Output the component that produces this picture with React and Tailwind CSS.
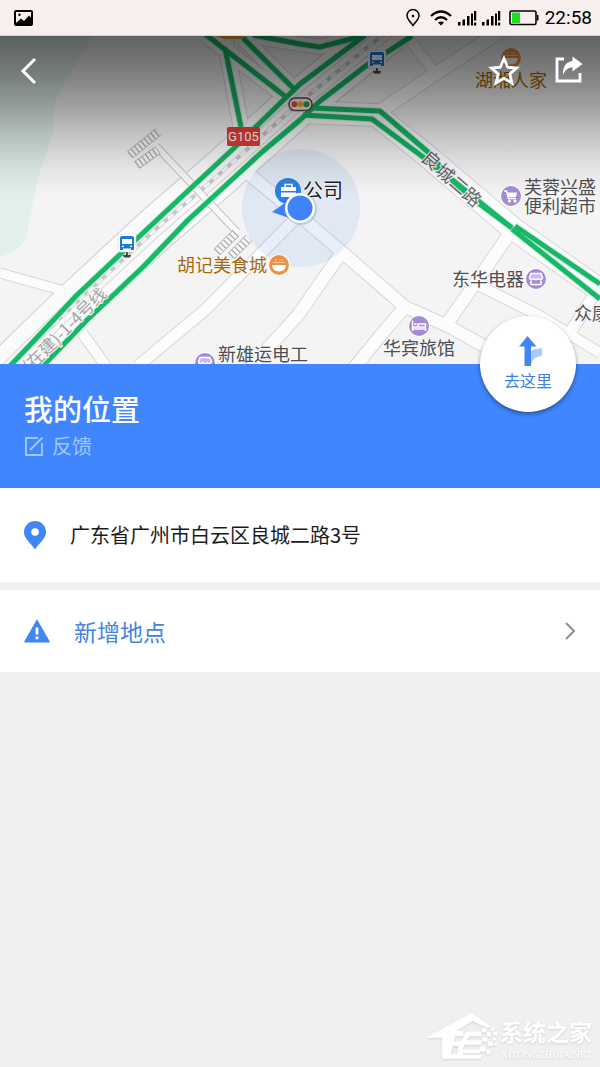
import React from 'react';

const cjk = 'font-["Noto_Sans_CJK_SC",sans-serif]';

// side streets, each drawn twice: a grey casing and a white fill
const streets = [
  { d: 'M0 273 L68 292', w: 9 },
  { d: 'M82 333 L106 366', w: 10 },
  { d: 'M245 171 L300 216 L342 252 L405 307 L450 327 L530 372', w: 12 },
  { d: 'M298 216 L205 310 L138 366', w: 11 },
  { d: 'M342 252 L298 315 L250 368', w: 12 },
  { d: 'M405 307 L385 330 L354 368', w: 12 },
  { d: 'M512 230 L477 281 L446 325', w: 12 },
  { d: 'M474 283 L538 315 L600 353', w: 10 },
  { d: 'M597 290 L568 336', w: 11 },
  { d: 'M382 110 L432 76 L502 30', w: 13 },
  { d: 'M408 38 L436 74', w: 10 },
  { d: 'M225 40 L241 127', w: 15 },
  { d: 'M207 36 L288 98', w: 15 },
  { d: 'M243 38 L297 92', w: 15 },
  { d: 'M250 36 L320 47 L365 34', w: 14 },
  { d: 'M303 112 L376 115 L426 155 L512 228 L600 290', w: 22 },
];

const highway = 'M-15 392 L28 349 L76 303 L157 228 L215 178 L300 102 L389 30';

const traffic = [
  'M10 366 L30 345 L77 295 L127 248 L190 189 L233 149 L300 84 L364 36',
  'M43 366 L87 320 L143 267 L188 220 L225 186 L262 152 L300 120 L320 101 L367 65 L412 36',
  'M205 34 L286 97',
  'M243 38 L296 91',
  'M225 48 L241 127',
  'M253 35 L300 44 L320 47 L366 35',
  'M312 108 L380 111 L428 152 L450 178 L512 228',
  'M303 115 L372 119 L423 157 L470 197 L512 228',
  'M515 226 L600 284',
  'M512 229 L600 299',
];

const StatusBar = () => (
  <header className="flex h-9 items-center justify-between border-b border-stone-300 bg-[#f7eeee] pl-3.5 pr-2 text-black">
    <svg className="h-4 w-5" viewBox="0 0 20 16">
      <rect x="1" y="1" width="17" height="14" rx="1" fill="none" stroke="black" strokeWidth="2" />
      <circle cx="5.5" cy="4.8" r="1.2" />
      <path d="M2 13 L7 8.500 L10 11 L15 5.500 L18 9 V15 H2Z" />
    </svg>
    <div className="flex items-center">
      <svg className="h-5 w-4" viewBox="0 0 16 20" fill="none" stroke="black" strokeWidth="1.500">
        <path d="M8 17.500 C5 13.500 2 11 2 7.500 A6 6 0 0 1 14 7.500 C14 11 11 13.500 8 17.500Z" />
        <circle cx="8" cy="8" r="1.300" fill="black" stroke="none" />
      </svg>
      <svg className="ml-2 h-5 w-6" viewBox="0 0 24 20" fill="none" stroke="black" strokeWidth="2.200">
        <path d="M2 8 Q12 -1 22 8" />
        <path d="M6 12 Q12 6.500 18 12" />
        <path d="M9 14.500 Q12 12.500 15 14.500 L12 17.500Z" fill="black" stroke="none" />
      </svg>
      {[0, 1].map((sim) => (
        <svg key={sim} className="ml-1 h-5 w-5" viewBox="0 0 20 20">
          <path d="M1 14h2.500v3.500H1z M5.500 11.500H8v6H5.500z M10 8h2.500v9.500H10z M14 5.500h2v12h-2z M17 3h2.200v9.500H17z M17 14.500h2.200v3H17z" />
        </svg>
      ))}
      <svg className="ml-2 h-4 w-8" viewBox="0 0 32 16">
        <rect x="1" y="1" width="26" height="13.500" rx="1.500" fill="none" stroke="black" strokeWidth="1.600" />
        <rect x="3" y="2.500" width="8" height="10.500" fill="#1fdc24" />
        <path d="M28 5h1.500v5.500H28z" />
      </svg>
      <span className="ml-1 font-[Roboto,sans-serif] text-[19px] leading-6">22:58</span>
    </div>
  </header>
);

const BusStop = ({ x, y }) => (
  <g transform={`translate(${x} ${y})`}>
    <path d="M-1 9h2v3h3l-1 2.500h-6l-1-2.500h3z" fill="#4d4048" />
    <rect x="-9" y="-9" width="18" height="18" rx="2" fill="white" stroke="#c9d3de" strokeWidth="0.500" />
    <path d="M-7 -5 Q-7 -7 -5 -7 H5 Q7 -7 7 -5 V7 H4 V5.500 H-4 V7 H-7Z" fill="#1a78d8" />
    <path d="M-5 -4 H5 V1 H-5Z M-5 2.800h2v1.300h-2z M3 2.800h2v1.300H3z" fill="white" />
  </g>
);

const Poi = ({ x, y, color, children }) => (
  <g transform={`translate(${x} ${y})`}>
    <circle r="10.800" fill="white" />
    <circle r="10" fill={color} />
    <g fill="none" stroke="white" strokeWidth="1.500">{children}</g>
  </g>
);

const Shop = ({ x, y }) => (
  <Poi x={x} y={y} color="#a58ad8">
    <path d="M-5 -5.500 H5 L6.500 -1 Q4.500 2 2.300 -0.500 Q0 2 -2.300 -0.500 Q-4.500 2 -6.500 -1Z" fill="#c9b8ea" />
    <path d="M-5 1.500 V5.500 H5 V1.500" />
  </Poi>
);

const Food = ({ x, y }) => (
  <Poi x={x} y={y} color="#eb9045">
    <path d="M-7 0 H7 Q6.500 6.500 0 6.500 Q-6.500 6.500 -7 0Z" fill="white" stroke="none" />
    <path d="M-6 -2.500 H6 M-4 -5 H-2 M0 -5 H4" strokeWidth="1.200" stroke="#f8c9a0" />
  </Poi>
);

const Ladder = ({ d }) => (
  <>
    <path d={d} stroke="#b5b5b5" strokeWidth="9" />
    <path d={d} stroke="#f6f6f6" strokeWidth="7.500" />
    <path d={d} stroke="#a8a8a8" strokeWidth="8" strokeDasharray="1.200 3" />
  </>
);

const MapView = () => (
  <svg className="block h-full w-full" viewBox="0 36 600 328" preserveAspectRatio="xMidYMid slice">
    <defs>
      <linearGradient id="shade" x1="0" y1="0" x2="0" y2="1">
        <stop offset="0" stopColor="black" stopOpacity="0.600" />
        <stop offset="0.200" stopColor="black" stopOpacity="0.500" />
        <stop offset="0.420" stopColor="black" stopOpacity="0.360" />
        <stop offset="0.620" stopColor="black" stopOpacity="0.200" />
        <stop offset="0.820" stopColor="black" stopOpacity="0.070" />
        <stop offset="1" stopColor="black" stopOpacity="0" />
      </linearGradient>
    </defs>
    <rect y="36" width="600" height="328" fill="#f4f4f4" />
    <path d="M0 36 H93 L60 90 L54 105 L53 132 L37 182 L26 238 Q18 252 0 257Z" fill="#e1f0eb" />

    <g fill="none">
      {streets.map((s) => (
        <path key={s.d} d={s.d} stroke="#d9d6d9" strokeWidth={s.w + 2} />
      ))}
      <path d={highway} stroke="#d0cdd0" strokeWidth="46" />
      {streets.map((s) => (
        <path key={s.d} d={s.d} stroke="#fcfcfc" strokeWidth={s.w} />
      ))}
      <path d={highway} stroke="#fbfbfb" strokeWidth="44" />
      <path d={highway} stroke="#dad6da" strokeWidth="15" />
      <path d={highway} stroke="#f8f8f8" strokeWidth="13" />
      <path d={highway} stroke="#c8c8cc" strokeWidth="4" />
      <path d={highway} stroke="#f6f6f6" strokeWidth="3" strokeDasharray="7 5" />

      <path d="M156 146 L237 232" stroke="#c4c4c4" strokeWidth="8" />
      <path d="M155 145 L238 233" stroke="#f8f8f8" strokeWidth="6" />
      <Ladder d="M130 155 L158 132" />
      <Ladder d="M137 165 L158 150" />
      <Ladder d="M217 252 L236 233" />
      <Ladder d="M231 256 L249 238" />
    </g>

    <path d="M217 36 H248 L242 39 H224Z" fill="#eeb02b" />

    <g fill="none" strokeLinejoin="round">
      {traffic.map((d) => (
        <path key={d} d={d} stroke="#d3f2e1" strokeWidth="7" />
      ))}
      {traffic.map((d) => (
        <path key={d} d={d} stroke="#17b868" strokeWidth="5" />
      ))}
    </g>

    <circle cx="301" cy="208" r="59" fill="#3f86ee" fillOpacity="0.110" />

    <BusStop x={377} y={59} />
    <BusStop x={127} y={243} />

    <rect x="289" y="98" width="23" height="12.500" rx="6" fill="#f8f2ee" stroke="#59464c" strokeWidth="1.500" />
    <circle cx="294.500" cy="104.200" r="3" fill="#e84658" />
    <circle cx="300.500" cy="104.200" r="3" fill="#efaf32" />
    <circle cx="306.500" cy="104.200" r="3" fill="#2b9f52" />

    <rect x="227" y="127" width="33" height="19" rx="1.500" fill="#e43d38" />
    <text x="243.500" y="141" textAnchor="middle" fill="white" className="font-[Roboto,sans-serif] text-[13px]">G105</text>

    <Food x={279} y={265} />
    <Food x={511} y={58} />
    <Poi x={511} y={196} color="#a58ad8">
      <path d="M-7 -5 H-4.500 L-2.500 2.500 H5" />
      <path d="M-4 -3.500 H6 L5 1 H-3Z" fill="white" stroke="none" />
      <circle cx="-1.500" cy="5" r="0.800" />
      <circle cx="4" cy="5" r="0.800" />
    </Poi>
    <Shop x={536} y={279} />
    <Poi x={419} y={326} color="#a58ad8">
      <path d="M-6.500 -5.500 V5 M-6.500 3 H6.500 V5 M-6.500 1 H6.500 V-2 H-1 V1 M-5 -2 H-2.500" />
    </Poi>
    <Shop x={205} y={363} />

    <g
      className={`${cjk} text-[18px]`}
      fill="#4e4e52"
      stroke="#f8f8f8"
      strokeWidth="2"
      paintOrder="stroke"
    >
      <text x="177" y="272" fill="#a5680f">胡记美食城</text>
      <text x="475" y="87" fill="#a5680f" stroke="none">湖湘人家</text>
      <text x="524" y="194">芙蓉兴盛</text>
      <text x="524" y="213">便利超市</text>
      <text x="452" y="286">东华电器</text>
      <text x="574" y="320">众康</text>
      <text x="383" y="355">华宾旅馆</text>
      <text x="218" y="361">新雄运电工</text>
      <g fill="#66666a" textAnchor="middle" dominantBaseline="central">
        <text transform="translate(432 159) rotate(41)">良</text>
        <text transform="translate(446 172) rotate(41)">城</text>
        <text transform="translate(460 184) rotate(41)">二</text>
        <text transform="translate(473 196) rotate(41)">路</text>
      </g>
    </g>
    <text
      className={`${cjk} text-[17px]`}
      transform="translate(30 373) rotate(-45)"
      fill="#a3a3a8"
      stroke="#f8f8f8"
      strokeWidth="2"
      paintOrder="stroke"
    >
      (在建)-1-4号线
    </text>

    <circle cx="288" cy="191" r="13" fill="#2f80e4" />
    <path d="M281 187 H296 V191 H281Z M281 192.500 H296 V197 H281Z" fill="white" />
    <path d="M285 187 V184.500 H292 V187" fill="none" stroke="white" strokeWidth="1.500" />
    <text x="303" y="198" fill="#1c2026" stroke="#f0f4fa" strokeWidth="2" paintOrder="stroke" className={`${cjk} text-[20px]`}>公司</text>
    <path d="M272 212 L289 200 V218Z" fill="#3f82f8" />
    <circle cx="301" cy="209" r="16" fill="#9aa9c4" fillOpacity="0.500" />
    <circle cx="300" cy="208" r="15" fill="white" />
    <circle cx="300" cy="208" r="12.500" fill="#3f82fa" />

    <rect y="36" width="600" height="160" fill="url(#shade)" />
  </svg>
);

const Watermark = () => (
  <div className="mt-auto flex items-end justify-end pb-1 pr-2 text-white drop-shadow-[0_1px_1px_rgba(0,0,0,0.12)]">
    <svg className="mb-1 h-12 w-[74px]" viewBox="70 90 222 145" fill="white">
      <path d="M70 171 L208 95 L270 140 H250 L209 120 L138 165 V234 H118 V171Z" />
      <path d="M138 160 L160 150 H182 V166 H158 L153 182 H176 V196 H150 L144 219 H166 V234 H130Z" />
      <path d="M182 170 Q184 152 204 152 H236 V166 H204 Q196 168 192 178 H236 V192 H188 Q182 194 182 206 H232 V218 H180 Q178 222 190 222 H236 V234 H160 Q166 190 182 170Z" />
      <path d="M238 142h14v12h-14z M252 154h14v13h-14z M266 140h10v10h-10z M272 152h12v12h-12z M240 170h15v13h-15z M257 182h15v14h-15z M272 170h8v9h-8z M232 197h17v15h-17z M252 207h12v12h-12z M276 186h8v8h-8z" />
    </svg>
    <div className="flex flex-col items-end">
      <span className={`${cjk} text-[23px] font-bold leading-8`}>系统之家</span>
      <span className='font-["Liberation_Serif",serif] text-[10px] leading-4'>XITONGZHIJIA.NET</span>
    </div>
  </div>
);

const App = () => (
  <div className='flex min-h-screen flex-col bg-[#f0f0f0] font-["Noto_Sans_CJK_SC",sans-serif]'>
    <StatusBar />

    <div className="relative h-[328px] overflow-hidden">
      <MapView />
      <nav className="absolute inset-x-0 top-0 flex h-[70px] items-center px-4 text-white">
        <button type="button" aria-label="返回" className="mr-auto">
          <svg className="h-8 w-6" viewBox="0 0 24 32" fill="none" stroke="currentColor" strokeWidth="3">
            <path d="M19 4 L7 16 L19 28" />
          </svg>
        </button>
        <button type="button" aria-label="收藏">
          <svg className="h-8 w-8" viewBox="0 0 32 32" fill="none" stroke="currentColor" strokeWidth="2.800">
            <path d="M16 3.500 L19.700 12.200 L28.500 13 L21.800 19 L23.900 28 L16 23.200 L8.100 28 L10.200 19 L3.500 13 L12.300 12.200Z" />
          </svg>
        </button>
        <button type="button" aria-label="分享" className="ml-8">
          <svg className="h-8 w-8" viewBox="0 0 32 32">
            <path d="M12 4 H5 V26 H28 V18" fill="none" stroke="currentColor" strokeWidth="2.800" />
            <path d="M20.500 1.500 L30.500 9 L20.500 16.500 V12.200 Q14 12.500 11 19.500 Q10.500 7.500 20.500 6Z" fill="currentColor" />
          </svg>
        </button>
      </nav>
    </div>

    <section className="relative h-[124px] bg-[#4086ff] px-6 pt-6 text-white">
      <h1 className="text-[29px] font-medium leading-10">我的位置</h1>
      <button type="button" className="flex items-center gap-2 text-[20px] leading-9 text-[#a3c8ff]">
        <svg className="h-5 w-5" viewBox="0 0 20 20" fill="none" stroke="currentColor" strokeWidth="1.800">
          <path d="M14 2 H2 V19 H18 V7" />
          <path d="M6 14 L18.500 1.500" />
        </svg>
        反馈
      </button>
      <button
        type="button"
        className="absolute -top-12 right-6 flex h-24 w-24 flex-col items-center justify-center rounded-full bg-white text-[16px] leading-6 text-[#3d7fe0] shadow-[0_2px_4px_rgba(0,0,0,0.4)]"
      >
        <svg className="h-8 w-8" viewBox="0 0 32 32">
          <path d="M16 17 Q20 13 30 12 V20 Q22 20 19 28Z" fill="#a9caf9" />
          <path d="M15.500 0 L24.500 10.500 H19 V30 H12.500 V10.500 H7Z" fill="#4086f5" />
        </svg>
        去这里
      </button>
    </section>

    <section className="flex h-[94px] items-center bg-white px-6">
      <svg className="h-7 w-[22px]" viewBox="0 0 22 28">
        <path d="M11 0 A11 11 0 0 1 22 11 C22 18 15 22 12 27.300 Q11 28.500 10 27.300 C7 22 0 18 0 11 A11 11 0 0 1 11 0Z" fill="#4086f5" />
        <circle cx="11" cy="11" r="3.800" fill="white" />
      </svg>
      <p className="ml-6 text-[20px] leading-8 text-[#1c1c1c]">广东省广州市白云区良城二路3号</p>
    </section>

    <button type="button" className="mt-2 flex h-[82px] w-full items-center bg-white px-6 text-left">
      <svg className="h-6 w-[26px]" viewBox="0 0 26 24">
        <path d="M13 1 L25.500 23 H0.500Z" fill="#4086f5" stroke="#4086f5" strokeWidth="1" strokeLinejoin="round" />
        <path d="M11.600 8.500 H14.400 V15.500 H11.600Z M11.600 17.500 H14.400 V20.200 H11.600Z" fill="white" />
      </svg>
      <span className="ml-6 flex-1 text-[23px] leading-8 text-[#4484de]">新增地点</span>
      <svg className="h-5 w-3" viewBox="0 0 12 20" fill="none" stroke="#8e8e8e" strokeWidth="2">
        <path d="M2 2 L10 10 L2 18" />
      </svg>
    </button>

    <Watermark />
  </div>
);

export default App;
